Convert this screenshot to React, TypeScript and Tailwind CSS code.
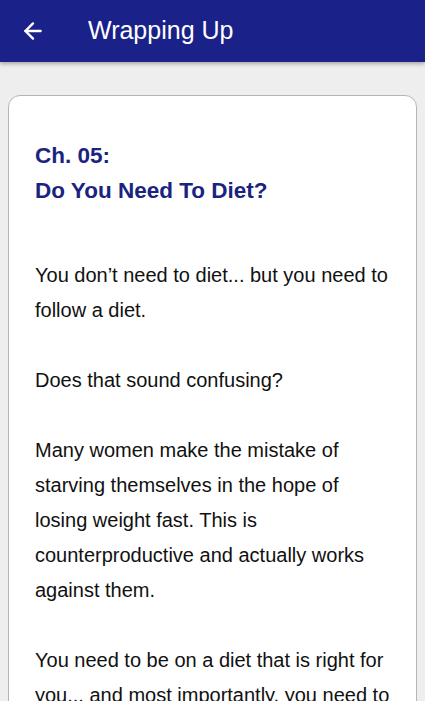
import { ArrowLeft } from "lucide-react";

const paragraphs = [
  "You don\u2019t need to diet... but you need to follow a diet.",
  "Does that sound confusing?",
  "Many women make the mistake of starving themselves in the hope of losing weight fast. This is counterproductive and actually works against them.",
  "You need to be on a diet that is right for you... and most importantly, you need to stick with it.",
];

export default function App() {
  return (
    <div className="h-[701px] overflow-hidden bg-[#eeeeee] font-['Liberation_Sans',Arial,sans-serif]">
      <header className="relative z-10 flex h-[62px] items-center bg-[#1a2188] px-5 shadow-[0_2px_4px_rgba(0,0,0,0.3)]">
        <ArrowLeft size={26} strokeWidth={2.2} className="text-white" />
        <h1 className="ml-[42px] text-[25px] text-white">Wrapping Up</h1>
      </header>

      <main className="px-2 pt-[33px]">
        <article className="rounded-[12px] border border-[#b5b5b5] bg-white px-[26px] pt-[42px] pb-10">
          <h2 className="text-[22.5px] font-bold leading-[35px] text-[#1a237e]">
            Ch. 05:
            <br />
            Do You Need To Diet?
          </h2>
          <div className="mt-[50px] space-y-[35px] text-[20px] leading-[35px] text-[#111111]">
            {paragraphs.map((p) => (
              <p key={p}>{p}</p>
            ))}
          </div>
        </article>
      </main>
    </div>
  );
}
